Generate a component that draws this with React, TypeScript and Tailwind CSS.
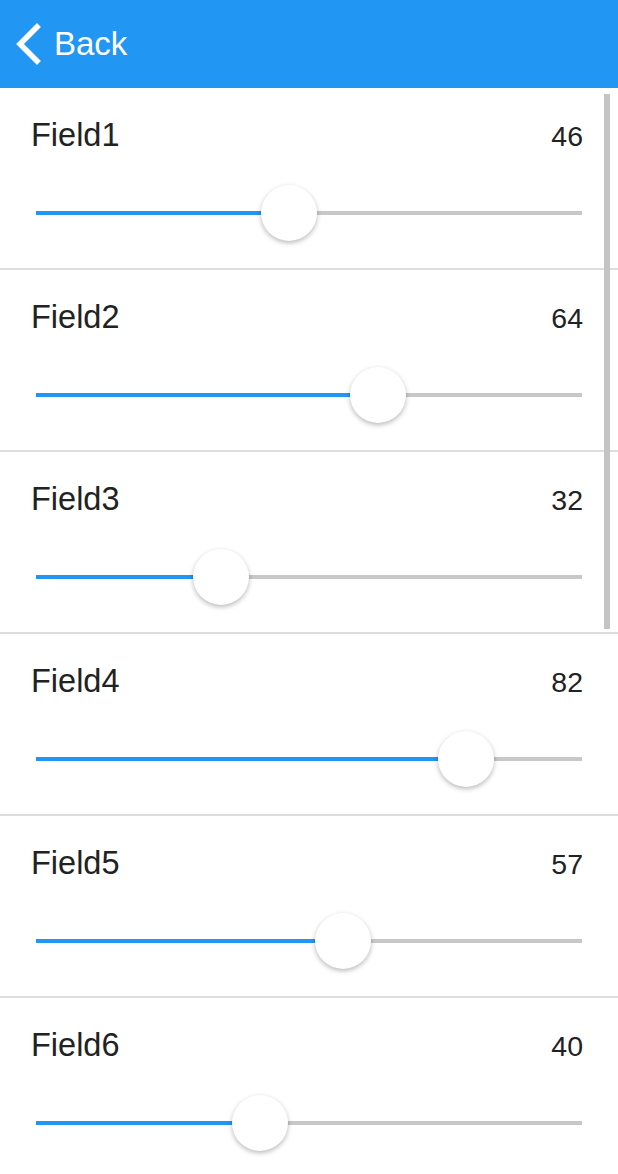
import React from "react";

const fields = [
  { name: "Field1", value: 46 },
  { name: "Field2", value: 64 },
  { name: "Field3", value: 32 },
  { name: "Field4", value: 82 },
  { name: "Field5", value: 57 },
  { name: "Field6", value: 40 },
];

const TRAVEL = 490;

const Slider: React.FC<{ value: number }> = ({ value }) => {
  const offset = (value / 100) * TRAVEL;
  return (
    <div className="relative mx-[36px] mt-[30px] h-14 flex items-center">
      <div className="flex h-1 w-full">
        <div className="h-1 bg-[#2196f3]" style={{ width: offset + 28 }} />
        <div className="h-1 flex-1 bg-[#c8c8c8]" />
      </div>
      <div
        className="absolute top-0 h-14 w-14 rounded-full bg-white shadow-[0_2px_5px_rgba(0,0,0,0.28)]"
        style={{ left: offset }}
      />
    </div>
  );
};

const App: React.FC = () => {
  return (
    <div className="relative h-[1174px] w-full overflow-hidden bg-white font-['Liberation_Sans',Arial,sans-serif] text-[#222]">
      <header className="flex h-[88px] items-center bg-[#2196f3] text-white">
        <svg width="54" height="88" viewBox="0 0 54 88" className="shrink-0">
          <polyline
            points="37,27 20,44 37,61"
            fill="none"
            stroke="white"
            strokeWidth="5.5"
            strokeLinecap="square"
          />
        </svg>
        <span className="text-[33px] leading-10">Back</span>
      </header>

      {fields.map((f) => (
        <div key={f.name} className="border-b-2 border-[#dddddd] pt-[27px] pb-[27px]">
          <div className="flex h-10 items-baseline justify-between pl-[31px] pr-[35px]">
            <span className="text-[32.5px] leading-10">{f.name}</span>
            <span className="text-[28.5px] leading-10">{f.value}</span>
          </div>
          <Slider value={f.value} />
        </div>
      ))}

      <div className="absolute left-[604px] top-[94px] h-[535px] w-[6px] bg-[#c4c4c4]" />
    </div>
  );
};

export default App;
